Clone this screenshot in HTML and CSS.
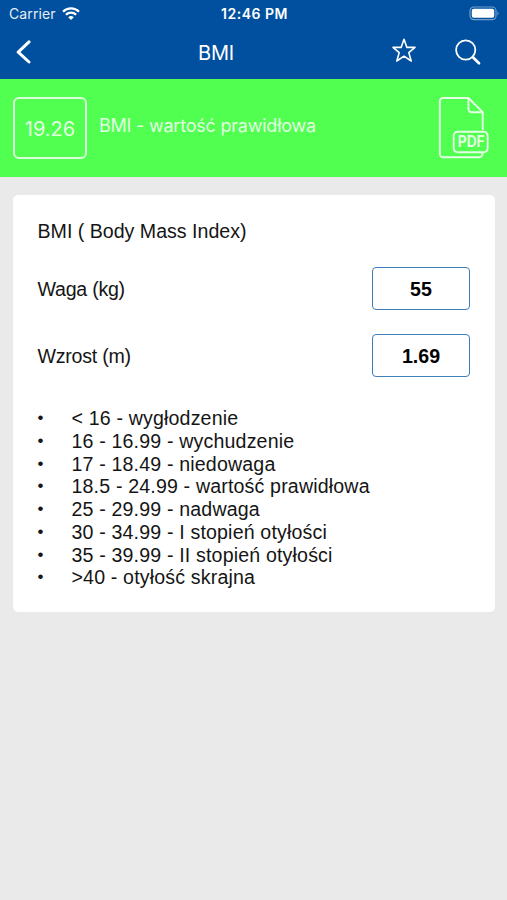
FILE: index.html
```html
<!DOCTYPE html>
<html lang="pl">
<head>
    <meta charset="UTF-8">
    <meta name="viewport" content="width=device-width, initial-scale=1.0">
    <title>BMI</title>
    <link rel="stylesheet" href="styles.css">
</head>
<body>
    <header class="header">
        <div class="status-bar">
            <div class="carrier">
                <span class="carrier-name">Carrier</span>
                <svg class="wifi" width="18" height="14" viewBox="0 0 18 14" fill="none" stroke="#fff" stroke-width="2.3">
                    <path d="M1 4.7a11.4 11.4 0 0 1 16 0"/>
                    <path d="M3.9 7.8a7.2 7.2 0 0 1 10.2 0"/>
                    <path d="M9 13.1L6.2 10.3a4 4 0 0 1 5.6 0z" fill="#fff" stroke="none"/>
                </svg>
            </div>
            <div class="time">12:46 PM</div>
            <svg class="battery" width="31" height="15" viewBox="0 0 31 15">
                <rect x="1" y="1" width="26" height="12.6" rx="3.8" fill="none" stroke="#fff" stroke-opacity=".45" stroke-width="1.2"/>
                <rect x="2.8" y="2.8" width="22.4" height="9" rx="2" fill="#fff"/>
                <path d="M28.5 5.2q2 2.1 0 4.2z" fill="#fff" fill-opacity=".5"/>
            </svg>
        </div>
        <nav class="nav-bar">
            <a class="back" href="#" aria-label="Wstecz">
                <svg width="16" height="24" viewBox="0 0 16 24" fill="none" stroke="#fff" stroke-width="3" stroke-linecap="round" stroke-linejoin="round">
                    <path d="M14 1.9L3.2 12.2L14 22"/>
                </svg>
            </a>
            <h1 class="title">BMI</h1>
            <div class="nav-actions">
                <svg width="26" height="26" viewBox="0 0 26 26" fill="none" stroke="#fff" stroke-width="1.6" stroke-linejoin="round">
                    <path d="M13 1.3L15.9 9.4H24L17.8 14.6L20.2 23L13 18.2L5.8 23L8.2 14.6L2 9.4H10.1z"/>
                </svg>
                <svg width="28" height="28" viewBox="0 0 28 28" fill="none" stroke="#fff" stroke-linecap="round">
                    <circle cx="11.7" cy="12" r="9.6" stroke-width="1.8"/>
                    <path d="M18.9 19.2L25 25.2" stroke-width="2.7"/>
                </svg>
            </div>
        </nav>
    </header>

    <section class="result">
        <div class="result-value">19.26</div>
        <div class="result-text">BMI - wartość prawidłowa</div>
        <svg class="pdf" width="52" height="64" viewBox="0 0 52 64" fill="none" stroke="#fff" stroke-opacity=".85" stroke-width="1.9" stroke-linejoin="round">
            <path d="M45.7 34V16.2L31.4 2H6a3.2 3.2 0 0 0-3.2 3.2V58a3.2 3.2 0 0 0 3.2 3.2H42a3.7 3.7 0 0 0 3.7-3.7V56.8"/>
            <path d="M31.4 2V13a3.2 3.2 0 0 0 3.2 3.2H45.7"/>
            <rect x="16.7" y="35.8" width="34" height="20.5" rx="4"/>
            <text class="pdf-label" x="34.2" y="51.4" text-anchor="middle" textLength="27" lengthAdjust="spacingAndGlyphs">PDF</text>
        </svg>
    </section>

    <main class="card">
        <h2 class="card-title">BMI ( Body Mass Index)</h2>
        <div class="field">
            <label for="weight">Waga (kg)</label>
            <input type="text" id="weight" value="55">
        </div>
        <div class="field">
            <label for="height">Wzrost (m)</label>
            <input type="text" id="height" value="1.69">
        </div>
        <ul class="ranges">
            <li>&lt; 16 - wygłodzenie</li>
            <li>16 - 16.99 - wychudzenie</li>
            <li>17 - 18.49 - niedowaga</li>
            <li>18.5 - 24.99 - wartość prawidłowa</li>
            <li>25 - 29.99 - nadwaga</li>
            <li>30 - 34.99 - I stopień otyłości</li>
            <li>35 - 39.99 - II stopień otyłości</li>
            <li>&gt;40 - otyłość skrajna</li>
        </ul>
    </main>
</body>
</html>
```
FILE: styles.css
```css
* {
    margin: 0;
    padding: 0;
    box-sizing: border-box;
}

body {
    font-family: "Liberation Sans", Arial, sans-serif;
    font-size: 19.6px;
    color: #151515;
    background: #eaeaea;
    min-height: 100vh;
}

.header {
    height: 79px;
    background: #00509f;
    color: white;
    font-family: Inter, sans-serif;
}

.status-bar {
    display: grid;
    grid-template-columns: 1fr auto 1fr;
    align-items: center;
    height: 27px;
    padding: 0 7px 0 9px;
}

.carrier {
    display: flex;
    align-items: center;
    gap: 6px;
    font-size: 14px;
    letter-spacing: 0.1px;
}

.carrier-name {
    opacity: 0.9;
}

.time {
    font-size: 14px;
    font-weight: 600;
    letter-spacing: 0.5px;
}

.battery {
    justify-self: end;
}

.nav-bar {
    display: flex;
    align-items: center;
    height: 50px;
    padding: 0 25px 0 15px;
}

.back {
    display: flex;
    width: 183px;
}

.title {
    padding-top: 1px;
    font-size: 20px;
    font-weight: 400;
    letter-spacing: -0.2px;
}

.nav-actions {
    display: flex;
    margin-left: auto;
    gap: 37px;
}

.result {
    display: flex;
    align-items: center;
    height: 98px;
    padding: 0 18px 0 13px;
    background: #50ff50;
    color: rgba(255, 255, 255, 0.85);
    font-family: Inter, sans-serif;
}

.result-value {
    width: 74px;
    height: 62px;
    border: 2px solid rgba(255, 255, 255, 0.8);
    border-radius: 6px;
    line-height: 60px;
    font-size: 20px;
    text-align: center;
}

.result-text {
    flex: 1;
    margin: 0 0 5px 12px;
    font-size: 18px;
    letter-spacing: -0.22px;
}

.pdf-label {
    font-size: 15.5px;
    font-weight: 700;
    fill: #fff;
    fill-opacity: 0.85;
    stroke: none;
}

.card {
    height: 417px;
    margin: 18px 12px 0 13px;
    padding: 25px 25px 0 24.5px;
    background: white;
    border-radius: 5px;
}

.card-title {
    margin-bottom: 24px;
    font-size: inherit;
    font-weight: 400;
    line-height: 23px;
}

.field {
    display: flex;
    align-items: center;
    justify-content: space-between;
    height: 43px;
    margin-bottom: 24px;
}

.field label {
    padding-top: 2px;
    letter-spacing: -0.25px;
}

.field input {
    width: 98px;
    height: 43px;
    padding-top: 1px;
    border: 1.5px solid #3f7fba;
    border-radius: 4px;
    background: white;
    color: #000;
    font: bold 19.6px "Liberation Sans", Arial, sans-serif;
    text-align: center;
}

.ranges {
    padding-top: 6px;
    list-style: none;
    line-height: 22.75px;
    letter-spacing: 0.16px;
}

.ranges li {
    display: flex;
}

.ranges li::before {
    content: '•';
    width: 34px;
    font-size: 17px;
}
```
